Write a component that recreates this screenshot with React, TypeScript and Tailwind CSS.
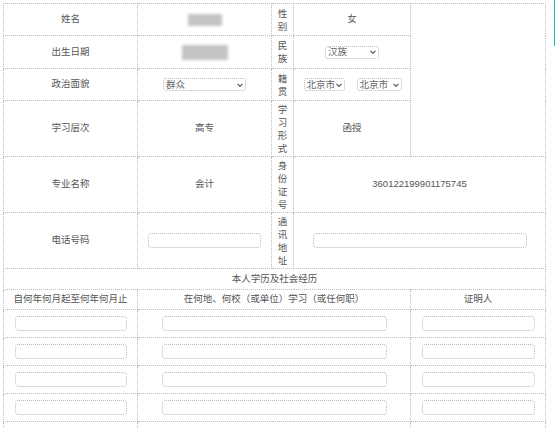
import type { ReactNode } from "react";

const cell = "border border-dotted border-[#bdbdbd] p-0 text-center align-middle";

function Field({ width }: { width: string }) {
  return <div className={`mx-auto h-[15px] rounded-[4px] border border-dotted border-[#b8b8b8] bg-white ${width}`} />;
}

function Select({ label, width }: { label: string; width: string }) {
  return (
    <div
      className={`flex h-[13px] shrink-0 items-center justify-between overflow-hidden whitespace-nowrap rounded-[3px] border border-dotted border-[#b8b8b8] pl-[2px] pr-[1px] text-[9.5px] leading-none text-[#666] ${width}`}
    >
      <span>{label}</span>
      <svg className="shrink-0" width="8" height="8" viewBox="0 0 8 8" fill="none" stroke="#555" strokeWidth="1.2">
        <path d="M1.5 2.8 4 5.3 6.5 2.8" />
      </svg>
    </div>
  );
}

function Vertical({ text }: { text: string }) {
  return (
    <div className="flex flex-col items-center leading-[13px]">
      {text.split("").map((ch, i) => (
        <span key={i}>{ch}</span>
      ))}
    </div>
  );
}

function Blur({ width, height }: { width: string; height: string }) {
  return <div className={`mx-auto bg-[#c4c4c4] blur-[1.5px] ${width} ${height}`} />;
}

function Row({ h, children }: { h: string; children: ReactNode }) {
  return <tr className={h}>{children}</tr>;
}

export default function App() {
  const history = [0, 1, 2, 3, 4];

  return (
    <div
      className="relative h-[428px] w-[555px] overflow-hidden bg-white p-[3px] text-[9.5px] text-[#555]"
      style={{ fontFamily: '"Liberation Sans", "Noto Sans CJK SC", sans-serif' }}
    >
      <table className="w-[542px] table-fixed border-collapse">
        <colgroup>
          <col className="w-[134px]" />
          <col className="w-[134px]" />
          <col className="w-[22px]" />
          <col className="w-[117px]" />
          <col className="w-[135px]" />
        </colgroup>
        <tbody>
          <Row h="h-[32px]">
            <td className={cell}>姓名</td>
            <td className={cell}>
              <Blur width="w-[34px]" height="h-[12px]" />
            </td>
            <td className={cell}>
              <Vertical text="性别" />
            </td>
            <td className={cell}>女</td>
            <td className={cell} rowSpan={4} />
          </Row>
          <Row h="h-[33px]">
            <td className={cell}>出生日期</td>
            <td className={cell}>
              <Blur width="w-[46px]" height="h-[15px]" />
            </td>
            <td className={cell}>
              <Vertical text="民族" />
            </td>
            <td className={cell}>
              <div className="flex justify-center">
                <Select label="汉族" width="w-[54px]" />
              </div>
            </td>
          </Row>
          <Row h="h-[32px]">
            <td className={cell}>政治面貌</td>
            <td className={cell}>
              <div className="flex justify-center">
                <Select label="群众" width="w-[83px]" />
              </div>
            </td>
            <td className={cell}>
              <Vertical text="籍贯" />
            </td>
            <td className={cell}>
              <div className="flex justify-center gap-[12px] pl-[1px]">
                <Select label="北京市" width="w-[41px]" />
                <Select label="北京市" width="w-[45px]" />
              </div>
            </td>
          </Row>
          <Row h="h-[56px]">
            <td className={cell}>学习层次</td>
            <td className={cell}>高专</td>
            <td className={cell}>
              <Vertical text="学习形式" />
            </td>
            <td className={cell}>函授</td>
          </Row>
          <Row h="h-[56px]">
            <td className={cell}>专业名称</td>
            <td className={cell}>会计</td>
            <td className={cell}>
              <Vertical text="身份证号" />
            </td>
            <td className={cell} colSpan={2}>
              360122199901175745
            </td>
          </Row>
          <Row h="h-[56px]">
            <td className={cell}>电话号码</td>
            <td className={cell}>
              <Field width="w-[113px]" />
            </td>
            <td className={cell}>
              <Vertical text="通讯地址" />
            </td>
            <td className={cell} colSpan={2}>
              <Field width="w-[214px]" />
            </td>
          </Row>
          <Row h="h-[21px]">
            <td className={cell} colSpan={5}>
              本人学历及社会经历
            </td>
          </Row>
          <Row h="h-[20px]">
            <td className={cell}>自何年何月起至何年何月止</td>
            <td className={cell} colSpan={3}>
              在何地、何校（或单位）学习（或任何职）
            </td>
            <td className={cell}>证明人</td>
          </Row>
          {history.map((i) => (
            <Row key={i} h="h-[28px]">
              <td className={cell}>
                <Field width="w-[112px]" />
              </td>
              <td className={cell} colSpan={3}>
                <Field width="w-[225px]" />
              </td>
              <td className={cell}>
                <Field width="w-[113px]" />
              </td>
            </Row>
          ))}
        </tbody>
      </table>
      <div className="absolute right-0 top-0 h-[46px] w-[1px] bg-[#1cb8c4]" />
    </div>
  );
}
